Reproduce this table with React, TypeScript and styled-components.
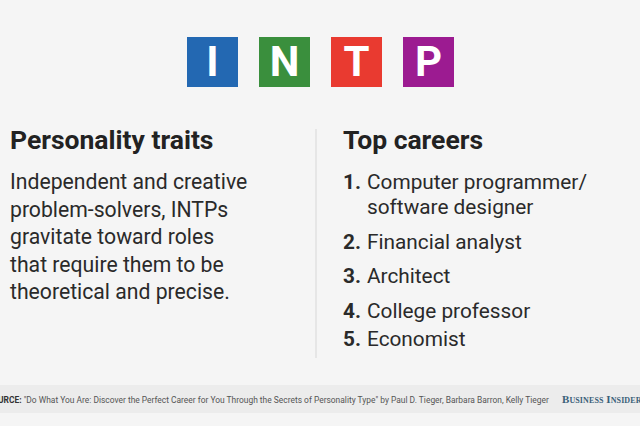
import React from "react";
import styled, { createGlobalStyle } from "styled-components";

const Global = createGlobalStyle`
  html, body { margin: 0; padding: 0; background: #f5f5f5; }
  body { width: 640px; height: 426px; overflow: hidden; font-family: Roboto, "Noto Sans", sans-serif; color: #262626; }
`;

const Page = styled.div`
  width: 640px;
  height: 426px;
  display: flex;
  flex-direction: column;
  overflow: hidden;
  background: #f5f5f5;
`;

const Letters = styled.div`
  display: flex;
  justify-content: center;
  gap: 21px;
  padding-top: 37px;
  padding-left: 1px;
`;

const LetterBox = styled.div<{ $bg: string }>`
  width: 51px;
  height: 50px;
  background: ${(p) => p.$bg};
  color: #fff;
  display: flex;
  align-items: center;
  justify-content: center;
  font-family: Roboto, sans-serif;
  font-weight: 700;
  font-size: 42px;
  line-height: 1;
`;

const Columns = styled.div`
  display: flex;
  margin-top: 42px;
  height: 229px;
`;

const LeftCol = styled.div`
  width: 305px;
  padding-left: 10px;
  border-right: 2px solid #e6e6e6;
`;

const RightCol = styled.div`
  padding-left: 26px;
`;

const Heading = styled.h2`
  margin: -4px 0 0;
  font-family: Roboto, sans-serif;
  font-weight: 700;
  font-size: 26.5px;
  line-height: 30px;
  color: #222;
`;

const Body = styled.p`
  margin: 13px 0 0;
  font-family: Roboto, sans-serif;
  font-size: 21.2px;
  line-height: 27.5px;
  color: #2a2a2a;
`;

const List = styled.ol`
  list-style: none;
  margin: 14.5px 0 0;
  padding: 0;
`;

const Item = styled.li<{ $gap: number }>`
  display: flex;
  margin-top: ${(p) => p.$gap}px;
  font-family: Roboto, sans-serif;
  font-size: 20.8px;
  line-height: 25px;
  color: #2a2a2a;
`;

const Num = styled.span`
  font-weight: 700;
  width: 24px;
  flex: none;
`;

const SourceBar = styled.div`
  margin-top: 27px;
  height: 28px;
  background: #ececec;
  display: flex;
  align-items: center;
  white-space: nowrap;
  overflow: hidden;
`;

const SourceText = styled.span`
  font-family: Roboto, sans-serif;
  font-size: 9.5px;
  color: #555;
  margin-left: -13px;
  display: inline-block;
  transform: scaleX(0.886);
  transform-origin: left center;
  width: 575px;
  flex: none;
  b { font-weight: 700; color: #333; }
`;

const Brand = styled.span`
  font-family: "Liberation Serif", "DejaVu Serif", serif;
  font-size: 11px;
  font-variant: small-caps;
  letter-spacing: 0.1px;
  color: #3a6079;
  font-weight: 700;
  flex: none;
`;

const letters = [
  { l: "I", c: "#2368b2" },
  { l: "N", c: "#3a8f3d" },
  { l: "T", c: "#e93a30" },
  { l: "P", c: "#9c1b91" },
];

const careers = [
  { n: "1.", t: ["Computer programmer/", "software designer"], g: 0 },
  { n: "2.", t: ["Financial analyst"], g: 10 },
  { n: "3.", t: ["Architect"], g: 9 },
  { n: "4.", t: ["College professor"], g: 10 },
  { n: "5.", t: ["Economist"], g: 3 },
];

export default function App() {
  return (
    <Page>
      <Global />
      <Letters>
        {letters.map((x) => (
          <LetterBox key={x.l} $bg={x.c}>
            {x.l}
          </LetterBox>
        ))}
      </Letters>
      <Columns>
        <LeftCol>
          <Heading>Personality traits</Heading>
          <Body>
            Independent and creative
            <br />
            problem-solvers, INTPs
            <br />
            gravitate toward roles
            <br />
            that require them to be
            <br />
            theoretical and precise.
          </Body>
        </LeftCol>
        <RightCol>
          <Heading>Top careers</Heading>
          <List>
            {careers.map((c) => (
              <Item key={c.n} $gap={c.g}>
                <Num>{c.n}</Num>
                <span>
                  {c.t.map((line, i) => (
                    <React.Fragment key={i}>
                      {i > 0 && <br />}
                      {line}
                    </React.Fragment>
                  ))}
                </span>
              </Item>
            ))}
          </List>
        </RightCol>
      </Columns>
      <SourceBar>
        <SourceText>
          <b>SOURCE:</b> "Do What You Are: Discover the Perfect Career for You Through the Secrets of Personality Type" by Paul D. Tieger, Barbara Barron, Kelly Tieger
        </SourceText>
        <Brand>Business Insider</Brand>
      </SourceBar>
    </Page>
  );
}
